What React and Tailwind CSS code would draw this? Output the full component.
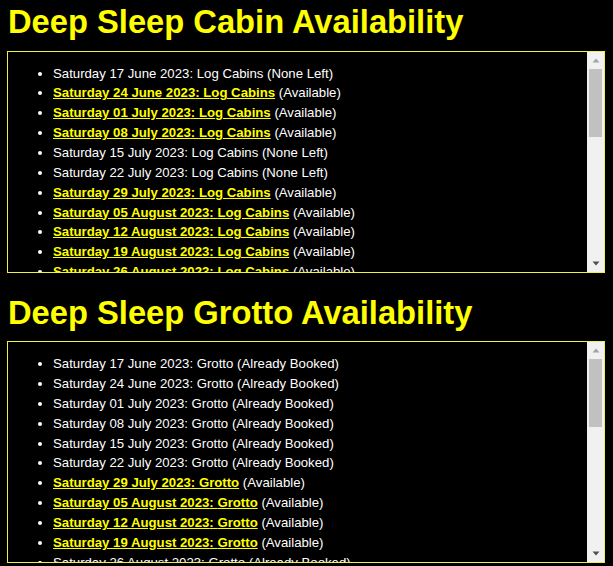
import React from 'react';

const start = new Date(Date.UTC(2023, 5, 17));
const months = ['January', 'February', 'March', 'April', 'May', 'June', 'July', 'August', 'September', 'October', 'November', 'December'];

const saturdays = Array.from({ length: 29 }, (_, i) => {
  const d = new Date(start.getTime() + i * 7 * 86400000);
  const day = String(d.getUTCDate()).padStart(2, '0');
  return `Saturday ${day} ${months[d.getUTCMonth()]} ${d.getUTCFullYear()}`;
});

// true = available (link), false = taken
const cabinFree = [false, true, true, true, false, false, true, true, true, true, true, true, false, true, true, true, true, true, true, true, false, true, true, true, true, true, true, true, true];
const grottoFree = [false, false, false, false, false, false, true, true, true, true, false, true, true, true, false, true, true, true, true, true, true, false, true, true, true, true, true, true, true];

const Scrollbar = () => (
  <div className="flex w-[17px] shrink-0 flex-col bg-[#f1f1f1]">
    <div className="flex h-[17px] items-center justify-center">
      <svg width="8" height="5" viewBox="0 0 8 5">
        <path d="M4 0.5 L7.5 4.5 L0.5 4.5 Z" fill="#a3a3a3" />
      </svg>
    </div>
    <div className="mx-[2px] h-[68px] bg-[#c1c1c1]" />
    <div className="flex-1" />
    <div className="flex h-[17px] items-center justify-center">
      <svg width="8" height="5" viewBox="0 0 8 5">
        <path d="M0.5 0.5 L7.5 0.5 L4 4.5 Z" fill="#505050" />
      </svg>
    </div>
  </div>
);

const AvailabilityList = ({ label, free, takenText }) => (
  <div className="flex h-[222px] w-[598px] border border-[#f0f040] bg-black">
    <div className="flex-1 overflow-hidden">
      <ul className="my-[12px] list-disc pl-[45px] text-[13.2px] leading-[19.85px] text-white">
        {saturdays.map((date, i) => (
          <li key={date}>
            {free[i] ? (
              <>
                <a href="#" className="font-bold text-[#ffff00] underline">
                  {date}: {label}
                </a>{' '}
                (Available)
              </>
            ) : (
              <>
                {date}: {label} ({takenText})
              </>
            )}
          </li>
        ))}
      </ul>
    </div>
    <Scrollbar />
  </div>
);

const App = () => {
  return (
    <div className="min-h-[566px] bg-black pl-[7px] pt-[3px] font-['Liberation_Sans',Arial,sans-serif]">
      <h1 className="mb-[10px] pl-[1px] text-[32.7px] font-bold leading-[37.6px] text-[#ffff00]">
        Deep Sleep Cabin Availability
      </h1>
      <AvailabilityList label="Log Cabins" free={cabinFree} takenText="None Left" />
      <h1 className="mb-[10px] mt-[21px] pl-[1px] text-[32.7px] font-bold leading-[37.6px] text-[#ffff00]">
        Deep Sleep Grotto Availability
      </h1>
      <AvailabilityList label="Grotto" free={grottoFree} takenText="Already Booked" />
    </div>
  );
};

export default App;
